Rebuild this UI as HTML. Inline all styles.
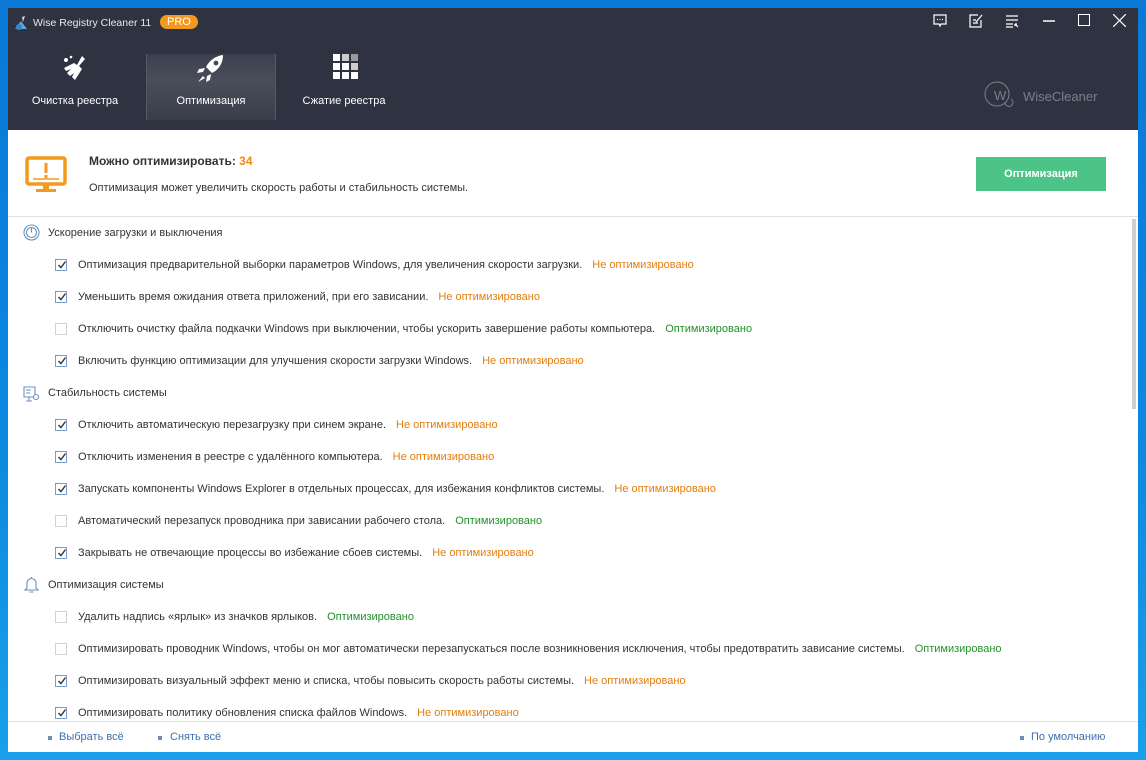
<!DOCTYPE html>
<html><head><meta charset="utf-8"><style>
*{margin:0;padding:0;box-sizing:border-box}
body{width:1146px;height:760px;background:linear-gradient(180deg,#0a78d6 0%,#0b8ae0 60%,#1aa0ea 100%);font-family:"Liberation Sans","DejaVu Sans",sans-serif;font-size:11px;color:#333;position:relative;overflow:hidden}
.win{position:absolute;left:8px;top:8px;width:1130px;height:744px;background:#fff}
.hdr{position:absolute;left:0;top:0;width:1130px;height:122px;background:#2f3341}
.title{position:absolute;left:25px;top:9px;color:#e8e8e8;font-size:10.5px}
.pro{position:absolute;left:152px;top:7px;background:#f39a1e;color:#fff;border-radius:9px;padding:1px 7px;font-size:11px}
.tab{position:absolute;top:46px;width:130px;height:66px;color:#fff;text-align:center;font-size:11px}
.tab span{position:absolute;left:0;right:0;top:41px}
.tab.act{background:linear-gradient(180deg,#3c404e,#4a4e5b 40%,#3a3e4b);border-left:1px solid #555a68;border-right:1px solid #555a68}
.ctl{position:absolute;top:6px}
.info{position:absolute;left:0;top:122px;width:1130px;height:87px;border-bottom:1px solid #dde1e6}
.t1{position:absolute;left:81px;top:24px;font-weight:bold;font-size:12px;color:#333}
.t1 b{color:#f08a14}
.t2{position:absolute;left:81px;top:52px;font-size:11px;color:#333}
.btn{position:absolute;left:968px;top:27px;width:130px;height:34px;background:#4cc487;color:#fff;font-weight:bold;text-align:center;line-height:34px;font-size:11px}
.row{position:absolute;left:0;font-size:11px;white-space:nowrap}
.cb{position:absolute;left:47px;width:12px;height:12px;border:1px solid #7a9cc8;background:#fff}
.cb.off{border-color:#cfd3d8}
.cb svg{position:absolute;left:1px;top:0}
.lbl{position:absolute;left:70px}
.no{color:#e27d0c;margin-left:10px}
.ok{color:#22922a;margin-left:10px}
.sec{position:absolute;left:40px;font-size:11px}
.sb{position:absolute;left:1124px;top:211px;width:4px;height:190px;background:#cfcfcf}
.foot{position:absolute;left:0;top:713px;width:1130px;border-top:1px solid #dde1e6;height:31px;color:#3b6fb0}
.foot span{position:absolute;top:9px}
.foot i{position:absolute;top:14px;width:4px;height:4px;background:#6b8fb8}
</style></head><body>
<div class="win">
<div class="hdr">
 <svg style="position:absolute;left:5px;top:7px" width="16" height="16" viewBox="0 0 16 16"><path d="M2 14 L8 6 L14 14 Z" fill="#5aa8e0"/><path d="M9 2 L12 1 L10 7 Z" fill="#cfd8e4"/><circle cx="6" cy="12" r="3" fill="#3b86c8"/></svg>
 <div class="title">Wise Registry Cleaner 11</div>
 <div class="pro">PRO</div>
 <div class="tab" style="left:2px"><svg style="position:absolute;left:52px;top:0" width="30" height="30" viewBox="0 0 30 30" fill="#fff"><path d="M20 2 L23 5 L17 12 L20 15 L13 26 L10 23 L12 19 L8 22 L5 19 L9 15 L4 17 L2 14 L12 9 L15 11 Z"/><circle cx="4" cy="6" r="2"/><circle cx="9" cy="3" r="1.3"/></svg><span>Очистка реестра</span></div>
 <div class="tab act" style="left:138px"><svg style="position:absolute;left:48px;top:0" width="32" height="30" viewBox="0 0 32 30" fill="#fff"><path d="M28 1 C20 2 14 7 11 13 L17 19 C23 16 28 10 28 1 Z"/><circle cx="21" cy="9" r="2.4" fill="#444856"/><path d="M10 14 L4 15 L2 19 L8 18 Z M16 20 L15 26 L11 28 L12 22 Z"/><path d="M8 22 L3 28 L10 24 Z"/></svg><span>Оптимизация</span></div>
 <div class="tab" style="left:271px"><svg style="position:absolute;left:54px;top:0" width="26" height="26" viewBox="0 0 26 26"><g fill="#fff"><rect x="0" y="0" width="7" height="7"/><rect x="9" y="0" width="7" height="7" fill="#ccc"/><rect x="18" y="0" width="7" height="7" fill="#999"/><rect x="0" y="9" width="7" height="7"/><rect x="9" y="9" width="7" height="7"/><rect x="18" y="9" width="7" height="7" fill="#ccc"/><rect x="0" y="18" width="7" height="7"/><rect x="9" y="18" width="7" height="7"/><rect x="18" y="18" width="7" height="7"/></g></svg><span>Сжатие реестра</span></div>
 <svg class="ctl" style="left:925px" width="14" height="14" viewBox="0 0 14 14" fill="none" stroke="#fff" stroke-width="1.2"><path d="M1 1 H13 V10 H8 L7 12 L6 10 H1 Z"/><path d="M4 5.5 h1 M6.5 5.5 h1 M9 5.5 h1"/></svg>
 <svg class="ctl" style="left:961px" width="14" height="14" viewBox="0 0 14 14" fill="none" stroke="#fff" stroke-width="1.2"><path d="M9 1 H1 V13 H12 V6"/><path d="M4 6 H7 M4 9 H9 M7 8 L13 1"/></svg>
 <svg class="ctl" style="left:997px" width="14" height="14" viewBox="0 0 14 14" fill="none" stroke="#fff" stroke-width="1.2"><path d="M1 2 H13 M1 6 H13 M1 10 H8 M1 13 H8 M10 10 L13 13 M10 10 H12 M10 10 V12"/></svg>
 <div style="position:absolute;left:1035px;top:12px;width:12px;height:2px;background:#ccc"></div>
 <div style="position:absolute;left:1070px;top:6px;width:12px;height:12px;border:1.3px solid #fff"></div>
 <svg class="ctl" style="left:1105px" width="13" height="13" viewBox="0 0 13 13" stroke="#fff" stroke-width="1.2"><path d="M0 0 L13 13 M13 0 L0 13"/></svg>
 <svg style="position:absolute;left:975px;top:72px" width="34" height="30" viewBox="0 0 34 30" fill="none" stroke="#7a7f8c" stroke-width="1"><circle cx="14" cy="14" r="12"/><path d="M22 22 a4 4 0 1 0 6 -3"/></svg>
 <div style="position:absolute;left:986px;top:80px;color:#7a7f8c;font-size:13px">W</div>
 <div style="position:absolute;left:1015px;top:81px;color:#7a7f8c;font-size:13px">WiseCleaner</div>
</div>
<div class="info">
 <svg style="position:absolute;left:17px;top:26px" width="42" height="38" viewBox="0 0 42 38"><rect x="2" y="2" width="38" height="26" rx="2" fill="none" stroke="#f39a1e" stroke-width="3.5"/><rect x="19.5" y="7" width="3" height="10" fill="#f39a1e"/><rect x="19.5" y="19" width="3" height="3" fill="#f39a1e"/><path d="M8 23 H34" stroke="#f39a1e" stroke-width="1.5"/><rect x="18" y="28" width="6" height="5" fill="#f39a1e"/><rect x="11" y="33" width="20" height="3" fill="#f39a1e"/></svg>
 <div class="t1">Можно оптимизировать: <b>34</b></div>
 <div class="t2">Оптимизация может увеличить скорость работы и стабильность системы.</div>
 <div class="btn">Оптимизация</div>
</div>
<div class="sb"></div>

<svg style="position:absolute;left:15px;top:216px" width="17" height="17" viewBox="0 0 17 17" fill="none" stroke="#6a8fc0" stroke-width="1.1"><circle cx="8.5" cy="8.5" r="7.5"/><circle cx="8.5" cy="8.5" r="5"/><path d="M8.5 4 V8.5"/></svg>
<div class="sec" style="top:219px">Ускорение загрузки и выключения</div>

<div class="row" style="top:251px"><div class="cb"><svg width="10" height="10" viewBox="0 0 10 10"><path d="M1.5 5 L4 7.5 L8.5 1.5" fill="none" stroke="#333" stroke-width="1.4"/></svg></div><div class="lbl">Оптимизация предварительной выборки параметров Windows, для увеличения скорости загрузки.<span class="no">Не оптимизировано</span></div></div>
<div class="row" style="top:283px"><div class="cb"><svg width="10" height="10" viewBox="0 0 10 10"><path d="M1.5 5 L4 7.5 L8.5 1.5" fill="none" stroke="#333" stroke-width="1.4"/></svg></div><div class="lbl">Уменьшить время ожидания ответа приложений, при его зависании.<span class="no">Не оптимизировано</span></div></div>
<div class="row" style="top:315px"><div class="cb off"></div><div class="lbl">Отключить очистку файла подкачки Windows при выключении, чтобы ускорить завершение работы компьютера.<span class="ok">Оптимизировано</span></div></div>
<div class="row" style="top:347px"><div class="cb"><svg width="10" height="10" viewBox="0 0 10 10"><path d="M1.5 5 L4 7.5 L8.5 1.5" fill="none" stroke="#333" stroke-width="1.4"/></svg></div><div class="lbl">Включить функцию оптимизации для улучшения скорости загрузки Windows.<span class="no">Не оптимизировано</span></div></div>

<svg style="position:absolute;left:15px;top:378px" width="17" height="17" viewBox="0 0 17 17" fill="none" stroke="#6a8fc0" stroke-width="1.1"><path d="M1 1 H12 V11 H1 Z M3 4 H8 M3 7 H7 M6 11 V15 M3 15 H9"/><circle cx="13" cy="11" r="2.5" fill="#fff"/></svg>
<div class="sec" style="top:379px">Стабильность системы</div>

<div class="row" style="top:411px"><div class="cb"><svg width="10" height="10" viewBox="0 0 10 10"><path d="M1.5 5 L4 7.5 L8.5 1.5" fill="none" stroke="#333" stroke-width="1.4"/></svg></div><div class="lbl">Отключить автоматическую перезагрузку при синем экране.<span class="no">Не оптимизировано</span></div></div>
<div class="row" style="top:443px"><div class="cb"><svg width="10" height="10" viewBox="0 0 10 10"><path d="M1.5 5 L4 7.5 L8.5 1.5" fill="none" stroke="#333" stroke-width="1.4"/></svg></div><div class="lbl">Отключить изменения в реестре с удалённого компьютера.<span class="no">Не оптимизировано</span></div></div>
<div class="row" style="top:475px"><div class="cb"><svg width="10" height="10" viewBox="0 0 10 10"><path d="M1.5 5 L4 7.5 L8.5 1.5" fill="none" stroke="#333" stroke-width="1.4"/></svg></div><div class="lbl">Запускать компоненты Windows Explorer в отдельных процессах, для избежания конфликтов системы.<span class="no">Не оптимизировано</span></div></div>
<div class="row" style="top:507px"><div class="cb off"></div><div class="lbl">Автоматический перезапуск проводника при зависании рабочего стола.<span class="ok">Оптимизировано</span></div></div>
<div class="row" style="top:539px"><div class="cb"><svg width="10" height="10" viewBox="0 0 10 10"><path d="M1.5 5 L4 7.5 L8.5 1.5" fill="none" stroke="#333" stroke-width="1.4"/></svg></div><div class="lbl">Закрывать не отвечающие процессы во избежание сбоев системы.<span class="no">Не оптимизировано</span></div></div>

<svg style="position:absolute;left:15px;top:568px" width="17" height="18" viewBox="0 0 17 18" fill="none" stroke="#6a8fc0" stroke-width="1.1"><path d="M8.5 1 V3 M4 12 V7 a4.5 4.5 0 0 1 9 0 V12 L15 14 H2 Z M6.5 16 H10.5"/></svg>
<div class="sec" style="top:571px">Оптимизация системы</div>

<div class="row" style="top:603px"><div class="cb off"></div><div class="lbl">Удалить надпись «ярлык» из значков ярлыков.<span class="ok">Оптимизировано</span></div></div>
<div class="row" style="top:635px"><div class="cb off"></div><div class="lbl">Оптимизировать проводник Windows, чтобы он мог автоматически перезапускаться после возникновения исключения, чтобы предотвратить зависание системы.<span class="ok">Оптимизировано</span></div></div>
<div class="row" style="top:667px"><div class="cb"><svg width="10" height="10" viewBox="0 0 10 10"><path d="M1.5 5 L4 7.5 L8.5 1.5" fill="none" stroke="#333" stroke-width="1.4"/></svg></div><div class="lbl">Оптимизировать визуальный эффект меню и списка, чтобы повысить скорость работы системы.<span class="no">Не оптимизировано</span></div></div>
<div class="row" style="top:699px"><div class="cb"><svg width="10" height="10" viewBox="0 0 10 10"><path d="M1.5 5 L4 7.5 L8.5 1.5" fill="none" stroke="#333" stroke-width="1.4"/></svg></div><div class="lbl">Оптимизировать политику обновления списка файлов Windows.<span class="no">Не оптимизировано</span></div></div>

<div class="foot" style="background:#fff">
 <i style="left:40px"></i><span style="left:51px">Выбрать всё</span>
 <i style="left:150px"></i><span style="left:162px">Снять всё</span>
 <i style="left:1012px"></i><span style="left:1023px">По умолчанию</span>
</div>
</div>
</body></html>
